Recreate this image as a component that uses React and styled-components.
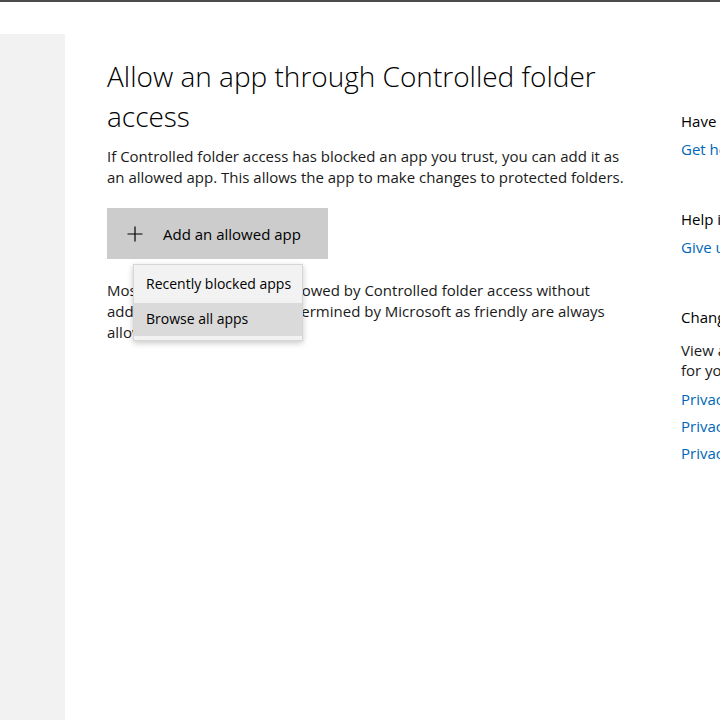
import styled, { createGlobalStyle } from 'styled-components';

const Global = createGlobalStyle`
  html, body {
    margin: 0;
    padding: 0;
    background: #ffffff;
    overflow: hidden;
  }
  body {
    font-family: "Segoe UI", "Open Sans", "Noto Sans", sans-serif;
    color: #000000;
  }
`;

const Window = styled.div`
  width: 720px;
  height: 720px;
  display: flex;
  flex-direction: column;
  border-top: 2px solid #4b4b4b;
  box-sizing: border-box;
  overflow: hidden;
`;

const Body = styled.div`
  flex: 1;
  display: flex;
  margin-top: 32px;
  min-height: 0;
`;

const Sidebar = styled.div`
  width: 65px;
  flex-shrink: 0;
  background: #f2f2f2;
`;

const Main = styled.div`
  width: 574px;
  flex-shrink: 0;
  padding: 22px 0 0 42px;
  box-sizing: border-box;
`;

const Title = styled.h1`
  margin: 0;
  width: 520px;
  font-size: 28px;
  line-height: 40px;
  font-weight: 300;
`;

const Text = styled.p`
  margin: ${p => p.$top || 0}px 0 0;
  width: 522px;
  font-size: 15px;
  line-height: 21px;
  color: #1a1a1a;
`;

const AddArea = styled.div`
  position: relative;
  margin-top: 20px;
`;

const AddButton = styled.button`
  display: flex;
  align-items: center;
  gap: 20px;
  width: 221px;
  height: 51px;
  padding: 0 0 0 20px;
  border: none;
  background: #cccccc;
  font-family: inherit;
  font-size: 15px;
  color: #000000;
  cursor: pointer;
`;

const Menu = styled.ul`
  position: absolute;
  left: 26px;
  top: 56px;
  width: 170px;
  margin: 0;
  padding: 0 0 4px;
  list-style: none;
  background: #f2f2f2;
  border: 1px solid #d6d6d6;
  box-shadow: 0 2px 6px rgba(0, 0, 0, 0.22);
  box-sizing: border-box;
  z-index: 2;
`;

const MenuItem = styled.li`
  height: ${p => p.$h}px;
  display: flex;
  align-items: center;
  padding: 0 12px 2px;
  box-sizing: border-box;
  font-size: 14px;
  background: ${p => (p.$hover ? '#dadada' : 'transparent')};
  color: #000000;
  white-space: nowrap;
`;

const Aside = styled.div`
  margin-left: 42px;
  padding-top: 77px;
  width: 260px;
  flex-shrink: 0;
  white-space: nowrap;
`;

const Section = styled.div`
  margin-bottom: 49px;
`;

const Heading = styled.div`
  font-size: 15px;
  line-height: 21px;
  color: #000000;
`;

const Note = styled.div`
  font-size: 15px;
  line-height: 20px;
  margin-top: 12px;
  color: #1a1a1a;
`;

const Link = styled.a`
  display: block;
  margin-top: ${p => p.$top}px;
  font-size: 15px;
  line-height: 21px;
  color: #0067b8;
  text-decoration: none;
`;

const PlusIcon = () => (
  <svg width="16" height="16" viewBox="0 0 16 16" fill="none" stroke="#000" strokeWidth="1.2">
    <path d="M8 0.5v15M0.5 8h15" />
  </svg>
);

export default function App() {
  return (
    <>
      <Global />
      <Window>
        <Body>
          <Sidebar />
          <Main>
            <Title>Allow an app through Controlled folder access</Title>
            <Text $top={10}>
              If Controlled folder access has blocked an app you trust, you can add it as an
              allowed app. This allows the app to make changes to protected folders.
            </Text>
            <AddArea>
              <AddButton>
                <PlusIcon />
                Add an allowed app
              </AddButton>
              <Menu>
                <MenuItem $h={38}>Recently blocked apps</MenuItem>
                <MenuItem $h={33} $hover>Browse all apps</MenuItem>
              </Menu>
            </AddArea>
            <Text $top={21}>
              Most of your apps will be allowed by Controlled folder access without adding them
              here. Apps determined by Microsoft as friendly are always allowed.
            </Text>
          </Main>
          <Aside>
            <Section>
              <Heading>Have a question?</Heading>
              <Link $top={7}>Get help</Link>
            </Section>
            <Section>
              <Heading>Help improve Windows Security</Heading>
              <Link $top={7}>Give us feedback</Link>
            </Section>
            <Section>
              <Heading>Change your privacy settings</Heading>
              <Note>
                View and change privacy settings
                <br />
                for your Windows 10 device.
              </Note>
              <Link $top={9}>Privacy settings</Link>
              <Link $top={6}>Privacy dashboard</Link>
              <Link $top={6}>Privacy Statement</Link>
            </Section>
          </Aside>
        </Body>
      </Window>
    </>
  );
}
